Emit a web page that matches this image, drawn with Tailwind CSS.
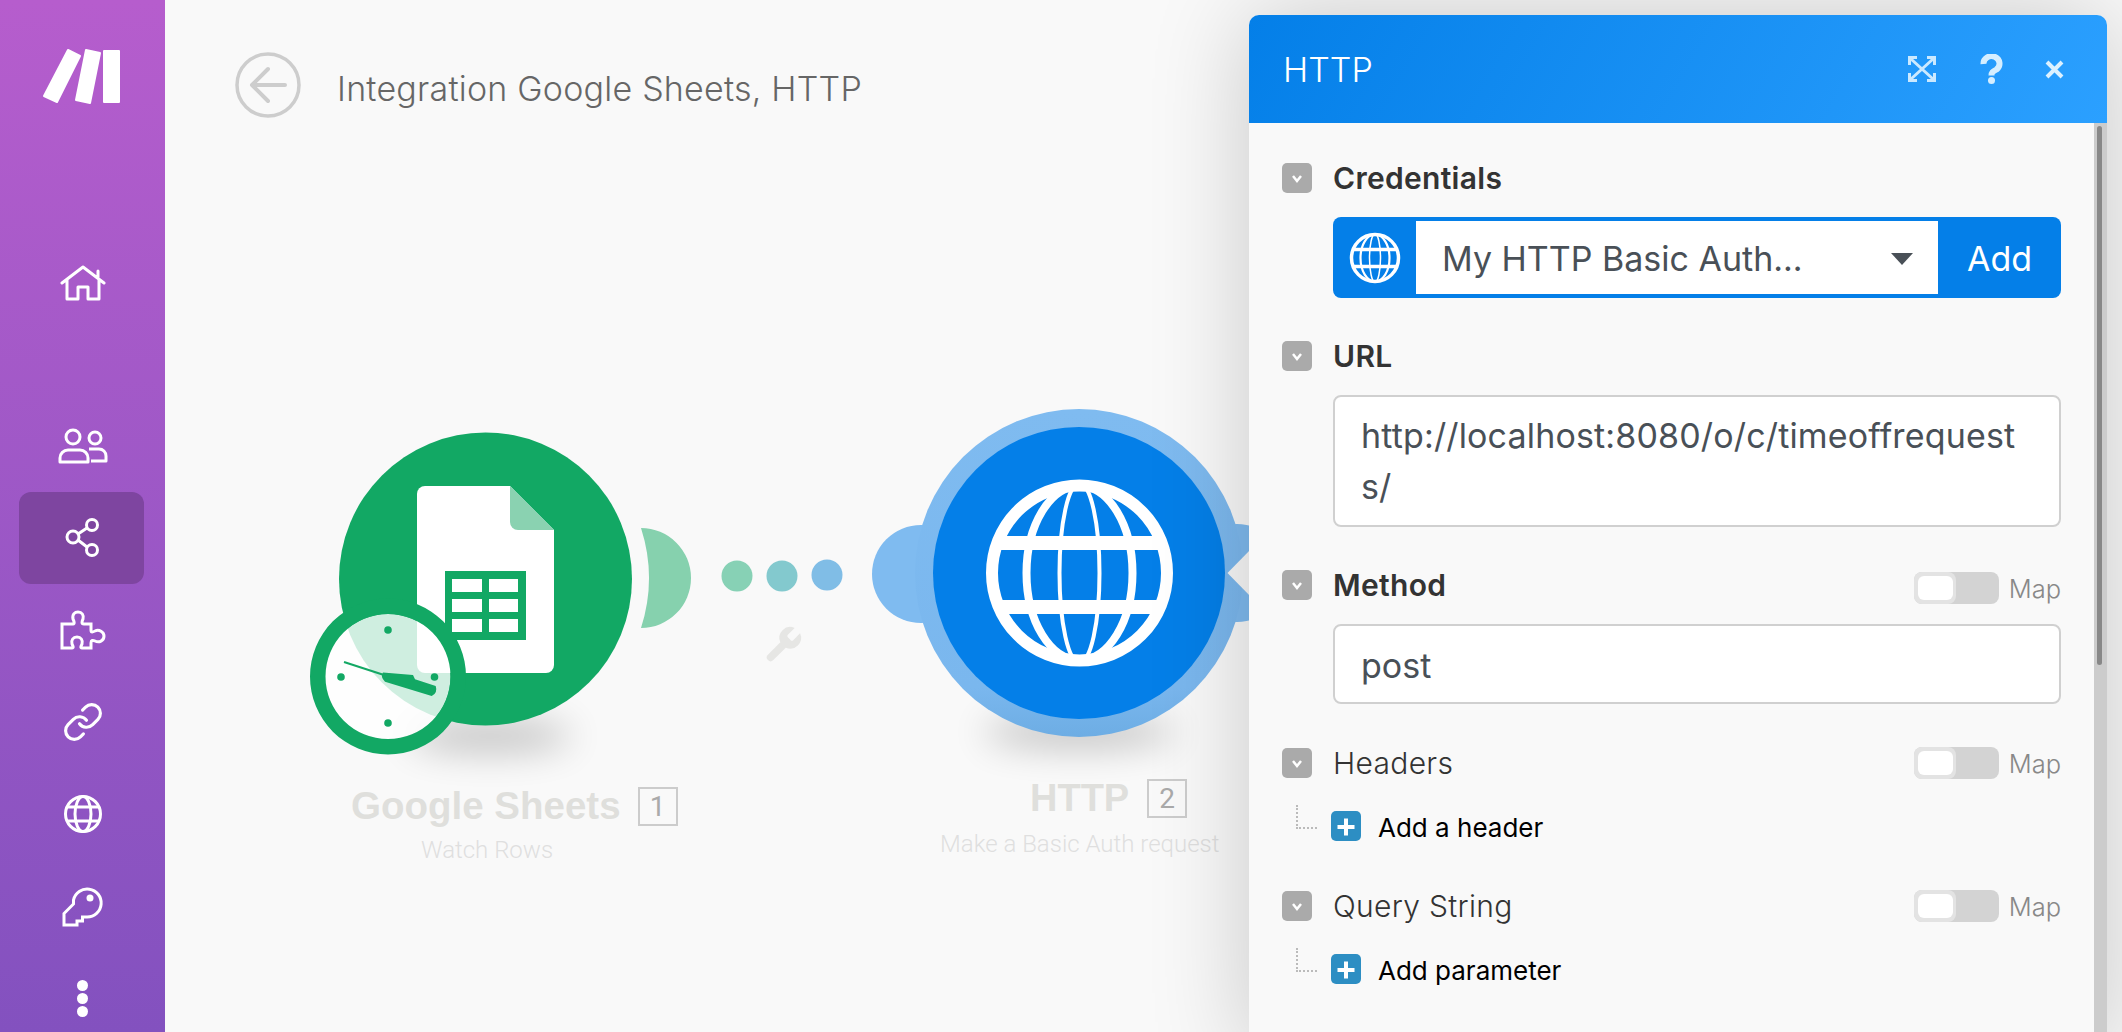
<!doctype html>
<html>
<head>
	<title>Integration Google Sheets, HTTP</title>
	<meta charset="UTF-8">
	<script src="https://cdn.jsdelivr.net/npm/@tailwindcss/browser@4"></script>
</head>

<body class="bg-[#f9f9f9] overflow-hidden font-['Inter',sans-serif]">

<div class="flex h-screen w-screen overflow-hidden">

	<!-- Sidebar -->
	<nav class="w-[165px] h-full shrink-0 flex flex-col items-stretch bg-linear-to-b from-[#b65dcd] to-[#8351bf]">
		<div class="h-[153px] shrink-0">
			<svg width="165" height="153" viewBox="0 0 165 153" fill="#fff" stroke="#fff" stroke-width="2" stroke-linejoin="round">
				<polygon points="68,50 80,56 57,102 44,96"/>
				<polygon points="86,50 100,53 90,103 76,100"/>
				<rect x="104" y="51" width="15" height="51"/>
			</svg>
		</div>
		<div class="mt-[84px] h-[92px] shrink-0 mx-[19px] flex items-center justify-center">
			<svg width="46" height="36" viewBox="0 0 46 36" fill="none" stroke="#fff" stroke-width="3" stroke-linecap="round" stroke-linejoin="round">
				<path d="M2 18 23 2 44 18M38 13V6M7 15V34H18V22H28V34H39V15"/>
			</svg>
		</div>
		<div class="mt-[71px] h-[92px] shrink-0 mx-[19px] flex items-center justify-center">
			<svg width="50" height="38" viewBox="57 427 50 38" fill="none" stroke="#fff" stroke-width="3" stroke-linejoin="round">
				<circle cx="72" cy="437" r="7"/>
				<circle cx="94" cy="438" r="6"/>
				<path d="M59 462V458a8 8 0 0 1 8-8H79a8 8 0 0 1 8 8V462Z"/>
				<path d="M88 449H98a7 7 0 0 1 7 7V461H90"/>
			</svg>
		</div>
		<div class="h-[92px] shrink-0 ml-[19px] mr-[21px] rounded-xl bg-[#7e45a0] flex items-center justify-center">
			<svg width="40" height="40" viewBox="62 518 40 40" fill="none" stroke="#fff" stroke-width="3">
				<circle cx="73" cy="537" r="6"/>
				<circle cx="92" cy="525" r="5.5"/>
				<circle cx="92" cy="550" r="5.5"/>
				<path d="M78 534 87 528M78 540 87 547"/>
			</svg>
		</div>
		<div class="h-[92px] shrink-0 mx-[19px] flex items-center justify-center">
			<svg width="46" height="40" viewBox="59 609 46 40" fill="none" stroke="#fff" stroke-width="3">
				<path d="M61 647V623H72C74 623 73 620 72 618C71 613 74 611 77 611C81 611 83 614 82 618C81 620 80 623 83 623H90V629C90 632 92 631 94 630C98 628 103 631 103 635C103 640 98 642 94 640C92 639 90 639 90 642V647H81C79 647 80 645 81 643C82 639 80 636 76 636C72 636 70 639 71 643C72 645 73 647 71 647Z"/>
			</svg>
		</div>
		<div class="h-[92px] shrink-0 mx-[19px] flex items-center justify-center">
			<svg width="42" height="42" viewBox="0 0 24 24" fill="none" stroke="#fff" stroke-width="1.8" stroke-linecap="round" stroke-linejoin="round">
				<path d="M10 13a5 5 0 0 0 7.54.54l3-3a5 5 0 0 0-7.07-7.07l-1.72 1.71"/>
				<path d="M14 11a5 5 0 0 0-7.54-.54l-3 3a5 5 0 0 0 7.07 7.07l1.71-1.71"/>
			</svg>
		</div>
		<div class="h-[92px] shrink-0 mx-[19px] flex items-center justify-center">
			<svg width="40" height="40" viewBox="0 0 40 40" fill="none" stroke="#fff" stroke-width="3">
				<circle cx="20" cy="20" r="17.5"/>
				<ellipse cx="20" cy="20" rx="8" ry="17.5"/>
				<path d="M4 13H36M4 27H36"/>
			</svg>
		</div>
		<div class="h-[92px] shrink-0 mx-[19px] flex items-center justify-center">
			<svg width="42" height="42" viewBox="62 885 42 42" fill="none" stroke="#fff" stroke-width="3">
				<path d="M73.5 900A14 14 0 1 1 87 917H82.500V921H77V925H64V913.500L73.500 904Z"/>
				<circle cx="90" cy="898" r="3.5" fill="#fff" stroke="none"/>
			</svg>
		</div>
		<div class="h-[92px] shrink-0 flex flex-col items-center justify-center gap-[2px]">
			<span class="w-[11px] h-[11px] rounded-full bg-white"></span>
			<span class="w-[11px] h-[11px] rounded-full bg-white"></span>
			<span class="w-[11px] h-[11px] rounded-full bg-white"></span>
		</div>
	</nav>

	<!-- Scenario canvas -->
	<main class="relative flex-1 h-full">
		<div class="flex items-center gap-[36px] pl-[70px] pt-[52px]">
			<svg width="66" height="66" viewBox="0 0 66 66" fill="none" stroke="#cdcdcd" stroke-linecap="round" stroke-linejoin="round">
				<circle cx="33" cy="33" r="31" stroke-width="3.5"/>
				<path d="M50 33H17M33 17 17 33 33 49" stroke-width="4"/>
			</svg>
			<h1 class="mt-[8px] text-[34px] leading-[40px] tracking-[0.22px] font-light text-[#666]">Integration Google Sheets, HTTP</h1>
		</div>

		<svg class="absolute left-0 top-0" width="1100" height="1032" viewBox="165 0 1100 1032">
			<defs>
				<filter id="soft" x="-50%" y="-150%" width="200%" height="400%"><feGaussianBlur stdDeviation="18"/></filter>
				<linearGradient id="ring" x1="0" y1="0" x2="0" y2="1">
					<stop offset="0" stop-color="#7fbbf0"/>
					<stop offset=".85" stop-color="#7ab7ee"/>
					<stop offset="1" stop-color="#6dade4"/>
				</linearGradient>
			</defs>

			<!-- shadows -->
			<ellipse cx="490" cy="736" rx="82" ry="16" fill="#000" opacity=".22" filter="url(#soft)"/>
			<ellipse cx="1079" cy="732" rx="96" ry="16" fill="#000" opacity=".22" filter="url(#soft)"/>

			<!-- Google Sheets module -->
			<path d="M641 528A50 50 0 0 1 641 628A163.5 163.5 0 0 0 641 528Z" fill="#86d1ae"/>
			<circle cx="485.5" cy="579" r="146.5" fill="#12a864"/>
			<path d="M425 486H510L554 530V665a8 8 0 0 1-8 8H425a8 8 0 0 1-8-8V494a8 8 0 0 1 8-8Z" fill="#fff"/>
			<path d="M510 486 554 530H518a8 8 0 0 1-8-8Z" fill="#8ad2b1"/>
			<rect x="445" y="571" width="81" height="69" fill="#12a864"/>
			<g fill="#fff">
				<rect x="452" y="579" width="30" height="13"/><rect x="489" y="579" width="29" height="13"/>
				<rect x="452" y="599" width="30" height="13"/><rect x="489" y="599" width="29" height="13"/>
				<rect x="452" y="619" width="30" height="13"/><rect x="489" y="619" width="29" height="13"/>
			</g>

			<!-- clock badge -->
			<circle cx="388" cy="676.5" r="62.5" fill="#fff" opacity=".8"/>
			<path fill-rule="evenodd" fill="#12a864" d="M310 676.5a78 78 0 1 0 156 0a78 78 0 1 0-156 0ZM325.500 676.500a62.500 62.500 0 1 1 125 0a62.500 62.500 0 1 1-125 0Z"/>
			<g fill="#12a864">
				<circle cx="388" cy="630" r="3.800"/><circle cx="341" cy="677" r="3.800"/>
				<circle cx="434.500" cy="677" r="3.800"/><circle cx="388" cy="723" r="3.800"/>
				<path d="M383 672.500 413 675 415 679.300 435.700 686Q438 693 431.700 696L385 681.700Q380 677 383 672.500Z"/>
			</g>
			<path d="M344 662 384 675" stroke="#12a864" stroke-width="2"/>

			<!-- connection -->
			<circle cx="737" cy="576" r="15.500" fill="#87d1b5"/>
			<circle cx="782" cy="576" r="15.500" fill="#83c9ce"/>
			<circle cx="827" cy="575" r="15.500" fill="#80bde6"/>
			<path transform="translate(761.400 623.400) scale(1.800)" fill="#e6e6e4" d="M14.700 6.300a1 1 0 0 0 0 1.400l1.600 1.600a1 1 0 0 0 1.400 0l3.770-3.770a6 6 0 0 1-7.940 7.940l-6.910 6.910a2.120 2.120 0 0 1-3-3l6.910-6.910a6 6 0 0 1 7.940-7.940l-3.760 3.760z"/>

			<!-- HTTP module -->
			<circle cx="921" cy="574" r="49" fill="#7fbbf0"/>
			<circle cx="1237" cy="573" r="49" fill="#7fbbf0"/>
			<circle cx="1079" cy="573" r="164" fill="url(#ring)"/>
			<circle cx="1079" cy="573" r="146" fill="#047fe8"/>
			<polygon points="1227.500,573 1252,548 1252,598" fill="#f9f9f9"/>
			<g fill="none" stroke="#fff">
				<circle cx="1079.500" cy="573" r="87.500" stroke-width="12"/>
				<ellipse cx="1079.500" cy="573" rx="53" ry="87" stroke-width="8"/>
				<ellipse cx="1079.500" cy="573" rx="20" ry="90" stroke-width="4"/>
				<path d="M996 543H1163M996 607H1163" stroke-width="14"/>
			</g>
		</svg>

		<div class="absolute left-[186px] top-[785px] flex items-center gap-[17px]">
			<span class="text-[38.500px] leading-[39px] font-bold text-[#dfdfdc] font-['Liberation_Sans',sans-serif]">Google Sheets</span>
			<span class="mt-[2px] w-[40px] h-[39px] flex items-center justify-center border-2 border-[#ccc] text-[28px] text-[#aaa] font-['Roboto',sans-serif]">1</span>
		</div>
		<div class="absolute left-[256px] top-[836px] text-[24px] leading-[28px] font-light text-[#dfdfdf] font-['Roboto',sans-serif]">Watch Rows</div>

		<div class="absolute left-[865px] top-[779px] flex items-center gap-[18px]">
			<span class="text-[38px] leading-[39px] font-bold text-[#dfdfdc] font-['Liberation_Sans',sans-serif]">HTTP</span>
			<span class="w-[40px] h-[39px] flex items-center justify-center border-2 border-[#ccc] text-[28px] text-[#aaa] font-['Roboto',sans-serif]">2</span>
		</div>
		<div class="absolute left-[775px] top-[830px] text-[24px] leading-[28px] font-light text-[#dfdfdf] font-['Roboto',sans-serif]">Make a Basic Auth request</div>
	</main>
</div>

<!-- HTTP settings panel -->
<section class="absolute left-[1249px] top-[15px] w-[858px] h-[1040px] rounded-t-[10px] bg-[#f9f9f9] shadow-[0_0_100px_rgba(0,0,0,0.2)] overflow-hidden">
	<header class="h-[108px] flex items-center justify-between pl-[34px] bg-linear-[120deg,#047fe8,#2ba0ff]">
		<h2 class="text-[34px] font-light text-white">HTTP</h2>
		<div class="flex items-center">
			<svg class="mr-[44px]" width="28" height="26" viewBox="0 0 28 26" fill="none" stroke="#cbe9ff" stroke-width="3">
				<path d="M3 3 25 23M25 3 3 23M1.500 9V1.500H9M19 1.500H26.500V9M1.500 17V24.500H9M19 24.500H26.500V17"/>
			</svg>
			<svg class="mr-[42px]" width="23" height="30" viewBox="0 0 23 30" fill="none" stroke="#d5eeff">
				<path d="M3.500 10A8 7.500 0 1 1 16.500 15.500C13 17.500 11.500 18 11.500 21.500" stroke-width="6"/>
				<circle cx="11.500" cy="26.500" r="3.500" fill="#d5eeff" stroke="none"/>
			</svg>
			<svg class="mr-[43px]" width="19" height="19" viewBox="0 0 19 19" fill="none" stroke="#dcf1ff" stroke-width="4">
				<path d="M2 2 17 17M17 2 2 17"/>
			</svg>
		</div>
	</header>

	<div class="relative h-[932px] pl-[33px] pr-[46px] pt-[40px]">
		<!-- scrollbar -->
		<div class="absolute right-0 top-0 bottom-0 w-[13px] bg-[#cccccc]">
			<div class="ml-[3px] mt-[3px] w-[5px] h-[539px] rounded-full bg-[#888]"></div>
		</div>

		<!-- Credentials -->
		<div class="h-[30px] flex items-center gap-[21px]">
			<svg class="shrink-0" width="30" height="30" viewBox="0 0 30 30"><rect width="30" height="30" rx="5" fill="#aaa"/><path d="M11 13 15 18 19 13" fill="none" stroke="#fff" stroke-width="2.500"/></svg>
			<span class="text-[30px] tracking-[0.3px] font-semibold text-[#333]">Credentials</span>
		</div>
		<div class="mt-[24px] ml-[51px] h-[81px] rounded-lg bg-[#047fe8] flex items-stretch py-[4px]">
			<div class="w-[83px] flex items-center justify-center">
				<svg width="52" height="52" viewBox="0 0 52 52" fill="none" stroke="#fff">
					<circle cx="26" cy="26" r="23.500" stroke-width="3.500"/>
					<ellipse cx="26" cy="26" rx="14.500" ry="23.500" stroke-width="2.200"/>
					<ellipse cx="26" cy="26" rx="5.500" ry="24" stroke-width="1.500"/>
					<path d="M5 17.500H47M5 34.500H47" stroke-width="3.500"/>
				</svg>
			</div>
			<div class="w-[522px] bg-white flex items-center justify-between pl-[26px] pr-[25px] pt-[2px] text-[34px] text-[#495057]">
				<span>My HTTP Basic Auth...</span>
				<span class="w-0 h-0 border-x-[11px] border-x-transparent border-t-[12px] border-t-[#495057]"></span>
			</div>
			<div class="flex-1 flex items-center justify-center pt-[2px] text-[34px] text-white">Add</div>
		</div>

		<!-- URL -->
		<div class="mt-[43px] h-[30px] flex items-center gap-[21px]">
			<svg class="shrink-0" width="30" height="30" viewBox="0 0 30 30"><rect width="30" height="30" rx="5" fill="#aaa"/><path d="M11 13 15 18 19 13" fill="none" stroke="#fff" stroke-width="2.500"/></svg>
			<span class="text-[30px] tracking-[0.3px] font-semibold text-[#333]">URL</span>
		</div>
		<div class="mt-[24px] ml-[51px] h-[132px] rounded-lg border-2 border-[#d0d0d0] bg-white pl-[26px] pr-[26px] pt-[13px] text-[34px] leading-[51px] tracking-[0.15px] text-[#495057] break-all">http://localhost:8080/o/c/timeoffrequests/</div>

		<!-- Method -->
		<div class="mt-[43px] h-[30px] flex items-center justify-between">
			<div class="flex items-center gap-[21px]">
				<svg class="shrink-0" width="30" height="30" viewBox="0 0 30 30"><rect width="30" height="30" rx="5" fill="#aaa"/><path d="M11 13 15 18 19 13" fill="none" stroke="#fff" stroke-width="2.500"/></svg>
				<span class="text-[30px] tracking-[0.3px] font-semibold text-[#333]">Method</span>
			</div>
			<div class="mt-[6px] flex items-center gap-[10px]">
				<div class="w-[85px] h-[32px] rounded-lg bg-[#d3d3d3]"><div class="w-[42px] h-[32px] rounded-lg bg-[#e3e3e3] p-[4px]"><div class="h-full w-[35px] rounded-md bg-white"></div></div></div>
				<span class="pt-[3px] text-[25.500px] font-light text-[#888]">Map</span>
			</div>
		</div>
		<div class="mt-[24px] ml-[51px] h-[80px] rounded-lg border-2 border-[#d0d0d0] bg-white pl-[26px] pt-[2px] flex items-center text-[34px] text-[#495057]">post</div>

		<!-- Headers -->
		<div class="mt-[44px] h-[30px] flex items-center justify-between">
			<div class="flex items-center gap-[21px]">
				<svg class="shrink-0" width="30" height="30" viewBox="0 0 30 30"><rect width="30" height="30" rx="5" fill="#aaa"/><path d="M11 13 15 18 19 13" fill="none" stroke="#fff" stroke-width="2.500"/></svg>
				<span class="text-[30px] tracking-[0.3px] font-light text-[#333]">Headers</span>
			</div>
			<div class="flex items-center gap-[10px]">
				<div class="w-[85px] h-[32px] rounded-lg bg-[#d3d3d3]"><div class="w-[42px] h-[32px] rounded-lg bg-[#e3e3e3] p-[4px]"><div class="h-full w-[35px] rounded-md bg-white"></div></div></div>
				<span class="pt-[3px] text-[25.500px] font-light text-[#888]">Map</span>
			</div>
		</div>
		<div class="mt-[33px] flex items-center h-[30px]">
			<span class="ml-[14px] -mt-[18px] w-[21px] h-[24px] border-l-2 border-b-2 border-dotted border-[#bbb]"></span>
			<svg class="ml-[14px] shrink-0" width="30" height="30" viewBox="0 0 30 30"><rect width="30" height="30" rx="5" fill="#2d8ec3"/><path d="M15 7.500V24.500M6.500 16H23.500" fill="none" stroke="#fff" stroke-width="4"/></svg>
			<span class="ml-[17px] pt-[2px] text-[26px] text-black">Add a header</span>
		</div>

		<!-- Query String -->
		<div class="mt-[50px] h-[30px] flex items-center justify-between">
			<div class="flex items-center gap-[21px]">
				<svg class="shrink-0" width="30" height="30" viewBox="0 0 30 30"><rect width="30" height="30" rx="5" fill="#aaa"/><path d="M11 13 15 18 19 13" fill="none" stroke="#fff" stroke-width="2.500"/></svg>
				<span class="text-[30px] tracking-[0.3px] font-light text-[#333]">Query String</span>
			</div>
			<div class="flex items-center gap-[10px]">
				<div class="w-[85px] h-[32px] rounded-lg bg-[#d3d3d3]"><div class="w-[42px] h-[32px] rounded-lg bg-[#e3e3e3] p-[4px]"><div class="h-full w-[35px] rounded-md bg-white"></div></div></div>
				<span class="pt-[3px] text-[25.500px] font-light text-[#888]">Map</span>
			</div>
		</div>
		<div class="mt-[33px] flex items-center h-[30px]">
			<span class="ml-[14px] -mt-[18px] w-[21px] h-[24px] border-l-2 border-b-2 border-dotted border-[#bbb]"></span>
			<svg class="ml-[14px] shrink-0" width="30" height="30" viewBox="0 0 30 30"><rect width="30" height="30" rx="5" fill="#2d8ec3"/><path d="M15 7.500V24.500M6.500 16H23.500" fill="none" stroke="#fff" stroke-width="4"/></svg>
			<span class="ml-[17px] pt-[2px] text-[26px] text-black">Add parameter</span>
		</div>
	</div>
</section>

</body>
</html>
